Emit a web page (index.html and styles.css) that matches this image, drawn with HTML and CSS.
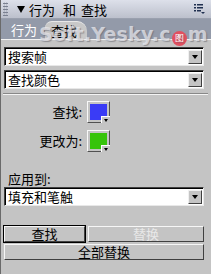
FILE: index.html
```html
<!DOCTYPE html>
<html>
<head>
<meta charset="utf-8">
<link rel="stylesheet" href="styles.css">
</head>
<body>
<div class="panel">
  <div class="titlebar">
    <div class="grip"></div>
    <span class="tri"></span>
    <span class="title"><span>行为</span><span class="w1">和</span><span class="w2">查找</span></span>
    <svg class="menu" width="11" height="10" viewBox="0 0 11 10">
      <rect x="0" y="0" width="2" height="1.5" fill="#203050"/>
      <rect x="3" y="0" width="6" height="1.5" fill="#203050"/>
      <rect x="0" y="3" width="2" height="1.5" fill="#203050"/>
      <rect x="3" y="3" width="6" height="1.5" fill="#203050"/>
      <rect x="0" y="6" width="2" height="1.5" fill="#203050"/>
      <rect x="3" y="6" width="4" height="1.5" fill="#203050"/>
      <path d="M7 8 L11 8 L9 10 Z" fill="#203050"/>
    </svg>
  </div>
  <div class="tabs">
    <span class="tab">行为</span>
    <span class="tab active">查找</span>
    <span class="mark">Soft.Yesky.c<span class="logo">图</span>m</span>
  </div>
  <div class="content">
    <div class="select"><span class="val">搜索帧</span><span class="arrow"></span></div>
    <div class="select"><span class="val">查找颜色</span><span class="arrow"></span></div>
    <div class="sep"></div>
    <div class="colors">
      <div class="crow"><span class="clabel">查找:</span><span class="swatch blue"></span></div>
      <div class="crow"><span class="clabel">更改为:</span><span class="swatch green"></span></div>
    </div>
    <div class="applylabel">应用到:</div>
    <div class="select"><span class="val">填充和笔触</span><span class="arrow"></span></div>
    <div class="buttons">
      <div class="brow">
        <span class="btn def">查找</span>
        <span class="btn dis">替换</span>
      </div>
      <span class="btn full">全部替换</span>
    </div>
  </div>
</div>
</body>
</html>
```
FILE: styles.css
```css
* { box-sizing: border-box; }
html, body { margin: 0; padding: 0; background: #c4c4c4; }
body { font-family: "Noto Sans CJK SC", "DejaVu Sans", sans-serif; font-size: 12px; color: #000; }
.panel { width: 211px; height: 274px; background: #c4c4c4; border-left: 1px solid #6a6a6a; position: relative; overflow: hidden; }
.titlebar { height: 19px; background: linear-gradient(#dde0ea, #bcc0cc); display: flex; align-items: center; border-bottom: 1px solid #9aa0ae; }
.grip { width: 5px; height: 14px; margin-left: 2px; background-image: radial-gradient(circle, #7a8090 45%, transparent 55%); background-size: 2.5px 3px; }
.tri { width: 0; height: 0; border-left: 4px solid transparent; border-right: 4px solid transparent; border-top: 7px solid #000; margin-left: 9px; }
.title { margin-left: 4px; font-size: 13px; line-height: 19px; white-space: nowrap; display: flex; }
.title .w1 { margin-left: 8px; }
.title .w2 { margin-left: 5px; }
.menu { margin-left: auto; margin-right: 6px; }
.tabs { height: 21px; background: #939aa9; display: flex; align-items: flex-end; position: relative; border-bottom: 1px solid #f2f2f2; }
.tab { font-size: 13px; line-height: 17px; padding: 0 6px; color: #fff; height: 18px; }
.tab:first-child { margin-left: 4px; }
.tab.active { background: #c8c8c8; color: #000; border-radius: 7px 10px 0 0; margin-left: 2px; padding: 0 10px 0 6px; border-top: 1px solid #e8e8e8; }
.mark { position: absolute; left: 38px; top: 4px; font-family: "DejaVu Sans", sans-serif; font-weight: bold; font-size: 19px; color: rgba(235,235,240,0.72); text-shadow: 1px 1px 1px rgba(90,90,100,0.5); letter-spacing: 0.2px; white-space: nowrap; }
.logo { display: inline-block; width: 15px; height: 15px; border-radius: 50%; background: #e05060; color: #fff; font-size: 9px; line-height: 15px; text-align: center; font-weight: normal; vertical-align: 0px; margin: 0 1px; }
.content { padding: 7px 7px 0 2px; }
.select { height: 19px; background: #fff; border: 1px solid; border-color: #404040 #e8e8e8 #e8e8e8 #404040; box-shadow: inset 1px 1px 0 #000; display: flex; align-items: center; margin-bottom: 4px; margin-left: 1px; }
.val { flex: 1; padding-left: 3px; font-size: 13px; line-height: 17px; }
.arrow { width: 14px; height: 14px; margin-right: 1px; background: #c4c4c4; border: 1px solid; border-color: #f0f0f0 #404040 #404040 #f0f0f0; position: relative; }
.arrow::after { content: ""; position: absolute; left: 3px; top: 4px; border-left: 3.5px solid transparent; border-right: 3.5px solid transparent; border-top: 4px solid #000; }
.sep { height: 2px; border-top: 1px solid #888; border-bottom: 1px solid #f4f4f4; margin: 1px 0 0 0; width: 205px; }
.colors { display: flex; flex-direction: column; gap: 7px; margin-top: 6px; }
.crow { display: flex; align-items: center; height: 22px; }
.clabel { width: 79px; text-align: right; font-size: 13px; line-height: 16px; }
.swatch { width: 23px; height: 22px; margin-left: 5px; border: 1px solid; border-color: #f8f8f8 #505050 #505050 #f8f8f8; position: relative; padding: 2px; background-clip: content-box; }
.swatch.blue { background-color: #3a3cf6; }
.swatch.green { background-color: #36c40a; }
.swatch::after { content: ""; position: absolute; right: -1px; bottom: -1px; width: 8px; height: 6px; background: #c4c4c4; border-top: 1px solid #fff; border-left: 1px solid #fff; }
.swatch::before { content: ""; position: absolute; right: 1px; bottom: 0px; z-index: 1; border-left: 2.5px solid transparent; border-right: 2.5px solid transparent; border-top: 3px solid #000; }
.applylabel { margin: 19px 0 0 5px; font-size: 13px; line-height: 16px; height: 16px; }
.buttons { margin-top: 20px; display: flex; flex-direction: column; gap: 2px; }
.brow { display: flex; gap: 3px; }
.btn { display: block; height: 16px; background: #c4c4c4; border: 1px solid; border-color: #f6f6f6 #404040 #404040 #f6f6f6; text-align: center; font-size: 13px; line-height: 14px; }
.btn.def { width: 81px; margin-left: 1px; outline: 1px solid #000; }
.btn.dis { flex: 1; color: #e8e8e8; }
.btn.full { margin-left: 1px; }
```
